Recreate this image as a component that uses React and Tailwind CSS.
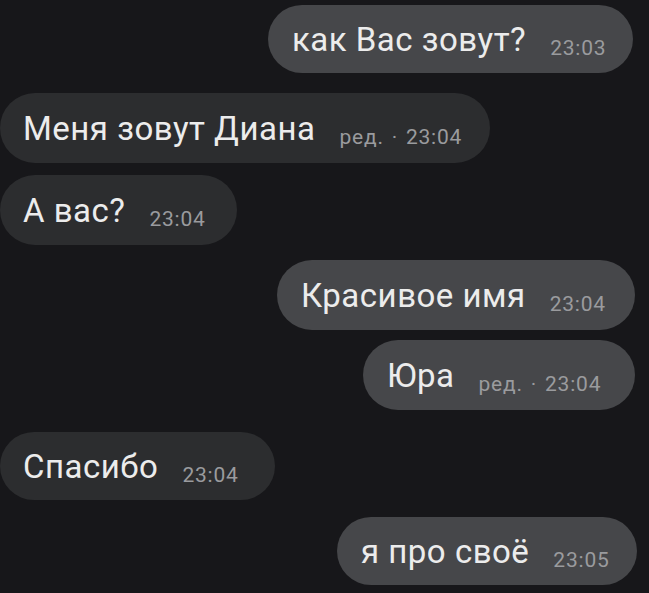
import React from "react";

const messages = [
  { text: "как Вас зовут?", time: "23:03", mine: true, mt: "mt-[5px]", h: "h-[68px]", w: "w-[365px]", mr: "mr-[16px]" },
  { text: "Меня зовут Диана", time: "ред. · 23:04", mine: false, mt: "mt-[20px]", h: "h-[70px]", w: "w-[490px]" },
  { text: "А вас?", time: "23:04", mine: false, mt: "mt-[12px]", h: "h-[70px]", w: "w-[237px]" },
  { text: "Красивое имя", time: "23:04", mine: true, mt: "mt-[15px]", h: "h-[70px]", w: "w-[358px]", mr: "mr-[14px]" },
  { text: "Юра", time: "ред. · 23:04", mine: true, mt: "mt-[10px]", h: "h-[70px]", w: "w-[272px]", mr: "mr-[14px]" },
  { text: "Спасибо", time: "23:04", mine: false, mt: "mt-[22px]", h: "h-[68px]", w: "w-[275px]" },
  { text: "я про своё", time: "23:05", mine: true, mt: "mt-[17px]", h: "h-[68px]", w: "w-[300px]", mr: "mr-[12px]" },
];

const Bubble = ({ msg }) => {
  return (
    <div className={`flex ${msg.mine ? "justify-end" : "justify-start"} ${msg.mt}`}>
      <div
        className={`${msg.w} ${msg.h} ${msg.mr || ""} rounded-full flex items-center ${
          msg.mine ? "bg-[#46474a] pl-[24px]" : "bg-[#2c2d2f] pl-[23px]"
        }`}
      >
        <span className="text-[33px] text-[#ececec] leading-none tracking-[0.5px]">{msg.text}</span>
        <span className="text-[21px] text-[#9a9b9e] leading-none tracking-[0.8px] ml-[24px] mt-[18px] whitespace-nowrap">
          {msg.time.replace(" · ", "\u2004·\u2004")}
        </span>
      </div>
    </div>
  );
};

const App = () => {
  return (
    <div
      className="w-[649px] h-[593px] bg-[#17171a] overflow-hidden flex flex-col"
      style={{ fontFamily: "Roboto, 'Noto Sans', sans-serif" }}
    >
      {messages.map((m, i) => (
        <Bubble key={i} msg={m} />
      ))}
    </div>
  );
};

export default App;
